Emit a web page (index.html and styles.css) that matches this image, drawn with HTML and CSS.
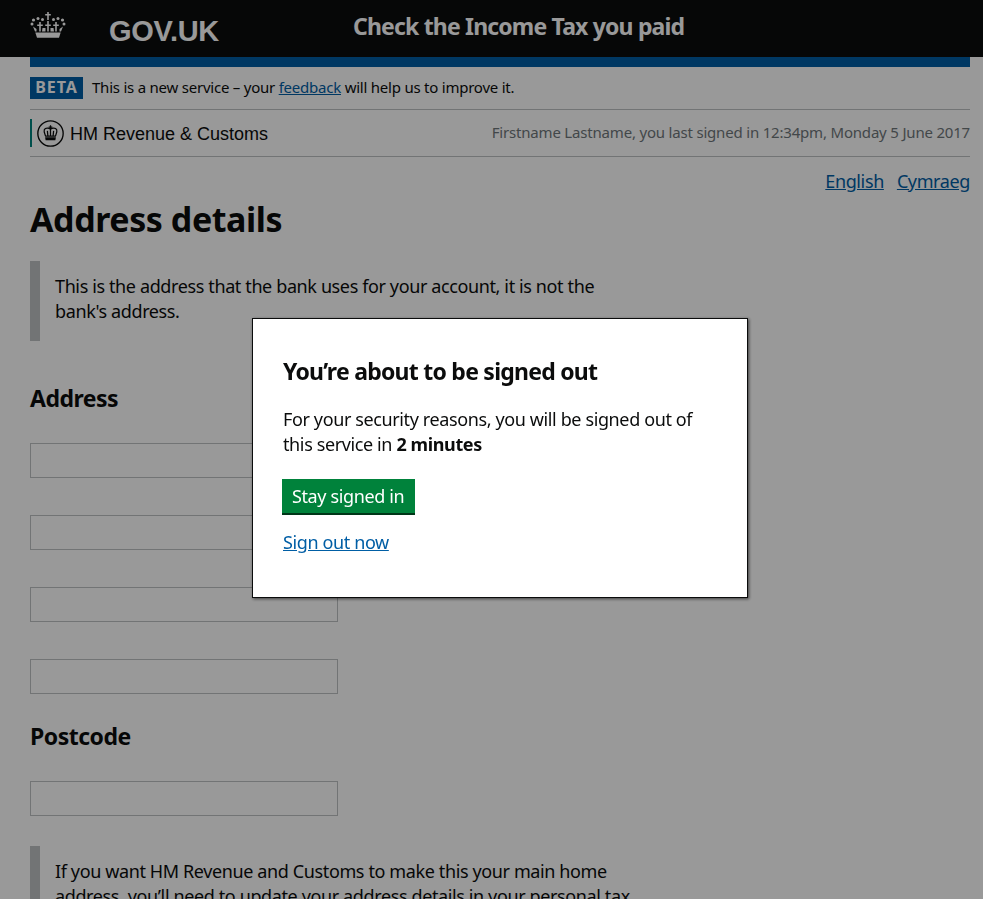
FILE: index.html
```html
<!DOCTYPE html>
<html lang="en">
<head>
<meta charset="utf-8">
<title>Address details</title>
<link rel="stylesheet" href="styles.css">
</head>
<body>
<header class="site-header">
  <div class="logo">
    <svg class="crown" viewBox="30 11 36 28" width="36" height="28" aria-hidden="true">
      <g fill="currentColor">
        <path d="M47.200 12h1.600v2h2v1.600h-2V20h-1.600v-4.400h-2V14h2z"/>
        <circle cx="32" cy="24" r="1.500"/><circle cx="33.500" cy="20" r="1.600"/><circle cx="38" cy="18.500" r="1.500"/><circle cx="42.500" cy="19.500" r="1.500"/>
        <circle cx="64" cy="24" r="1.500"/><circle cx="62.500" cy="20" r="1.600"/><circle cx="58" cy="18.500" r="1.500"/><circle cx="53.500" cy="19.500" r="1.500"/>
        <path d="M39.200 22h1.600v2.500h2v1.600h-2v5.400h-1.600v-5.400h-2v-1.600h2z"/>
        <path d="M47.200 21h1.600v3.500h2v1.600h-2v5.400h-1.600v-5.400h-2v-1.600h2z"/>
        <path d="M55.200 22h1.600v2.500h2v1.600h-2v5.400h-1.600v-5.400h-2v-1.600h2z"/>
        <path d="M33 26.500l3.500 2.500v2.500h-1.500zM63 26.500L59.500 29v2.500H61zM42.500 28h3v3.500h-3.500zM50.500 28h3l.5 3.500h-3.500z"/>
        <path d="M35.300 32.500h25.400L59 37.800H37z"/>
      </g>
    </svg>
    <span class="wordmark">GOV.UK</span>
  </div>
  <span class="service-name">Check the Income Tax you paid</span>
</header>
<main class="page">
  <div class="rule-blue"></div>
  <div class="beta"><strong class="tag">BETA</strong><span class="beta-text">This is a new service – your <a href="#">feedback</a> will help us to improve it.</span></div>
  <div class="account">
    <div class="org">
      <svg class="org-crest" viewBox="0 0 26 26" width="27" height="27" aria-hidden="true">
        <circle cx="13" cy="13" r="12.200" fill="none" stroke="currentColor" stroke-width="1.300"/>
        <g fill="none" stroke="currentColor" stroke-width="1.200">
          <path d="M13 9c-1.500-1.500-5-1.500-6 .5-.7 1.700.5 4 1.300 6h9.400c.8-2 2-4.300 1.300-6-1-2-4.500-2-6-.5zM13 9v6.500M10 10.500l.5 5M16 10.500l-.5 5"/>
        </g>
        <path fill="currentColor" d="M12.400 5h1.200v1.200h1.200v1.200h-1.200V9h-1.200V7.400h-1.200V6.200h1.200zM7.800 16.500h10.400l-.5 3H8.300z"/>
      </svg>
      <span class="org-name">HM Revenue &amp; Customs</span>
    </div>
    <p class="last-login">Firstname Lastname, you last signed in 12:34pm, Monday 5 June 2017</p>
  </div>
  <nav class="lang"><a href="#">English</a><a href="#">Cymraeg</a></nav>
  <h1>Address details</h1>
  <p class="inset inset-first">This is the address that the bank uses for your account, it is not the bank's address.</p>
  <h2 class="sub-first">Address</h2>
  <div class="fields">
    <div class="field"></div>
    <div class="field"></div>
    <div class="field"></div>
    <div class="field"></div>
  </div>
  <h2 class="sub-post">Postcode</h2>
  <div class="field"></div>
  <p class="inset inset-second">If you want HM Revenue and Customs to make this your main home address, you’ll need to update your address details in your personal tax account.</p>
</main>
<div class="overlay"></div>
<section class="dialog" role="dialog" aria-modal="true">
  <h2 class="dialog-title">You’re about to be signed out</h2>
  <p class="dialog-text">For your security reasons, you will be signed out of this service in <strong>2 minutes</strong></p>
  <a class="button" href="#">Stay signed in</a>
  <a class="sign-out" href="#">Sign out now</a>
</section>
</body>
</html>
```
FILE: styles.css
```css
* { box-sizing: border-box; }
html, body { margin: 0; height: 100%; overflow: hidden; }
body { font-family: "Noto Sans", sans-serif; color: #0b0c0c; background: #fff; font-size: 18px; letter-spacing: -.38px; line-height: 25px; }
a { color: #005ea5; }
p, h1, h2 { margin: 0; }

.site-header { height: 57px; background: #0b0c0c; color: #fff; display: flex; align-items: center; }
.logo { display: flex; align-items: center; width: 353px; padding-left: 30px; }
.crown { margin-top: -7px; }
.wordmark { font-family: "Liberation Sans", sans-serif; font-weight: 700; font-size: 29px; letter-spacing: -.3px; margin-left: 43px; margin-top: 5px; }
.service-name { font-weight: 700; font-size: 23px; letter-spacing: -.82px; margin-top: -5px; }

.page { padding: 0 13px 0 30px; }
.rule-blue { height: 10px; background: #005ea5; }
.beta { display: flex; align-items: center; height: 43px; border-bottom: 1px solid #bfc1c3; font-size: 15px; letter-spacing: -.23px; }
.tag { background: #005ea5; color: #fff; font-size: 16px; letter-spacing: .9px; width: 53px; height: 22px; line-height: 21px; text-align: center; margin-right: 9px; margin-top: -1px; }
.beta-text { margin-top: -2px; }

.account { display: flex; align-items: center; justify-content: space-between; height: 47px; border-bottom: 1px solid #bfc1c3; }
.org { display: flex; align-items: center; gap: 6px; height: 28px; border-left: 2px solid #00847f; padding-left: 5px; font-family: "Liberation Sans", sans-serif; font-size: 18px; letter-spacing: 0; }
.org-name { margin-top: 2px; }
.last-login { color: #6f777b; font-size: 15px; letter-spacing: -.19px; margin-top: -2px; }

.lang { display: flex; justify-content: flex-end; gap: 13px; margin-top: 12px; }
h1 { font-size: 34px; line-height: 40px; font-weight: 700; letter-spacing: -.43px; margin-top: 5px; }
.inset { border-left: 10px solid #bfc1c3; padding: 13px 0 17px 15px; width: 610px; }
.inset-first { margin-top: 22px; }
h2 { font-size: 23px; line-height: 30px; font-weight: 700; letter-spacing: -.5px; }
.sub-first { margin-top: 42px; }
.fields { display: flex; flex-direction: column; gap: 37px; margin-top: 30px; }
.field { width: 308px; height: 35px; border: 1px solid #bfc1c3; }
.sub-post { margin-top: 27px; margin-bottom: 30px; }
.inset-second { margin-top: 30px; }

.overlay { position: fixed; inset: 0; background: rgba(0, 0, 0, .4); }
.dialog { position: fixed; left: 252px; top: 318px; width: 496px; height: 280px; background: #fff; border: 1px solid #0b0c0c; box-shadow: 1px 1px 3px rgba(0,0,0,.6); padding: 37px 30px 0; }
.dialog-title { font-size: 23px; line-height: 30px; letter-spacing: -.75px; }
.dialog-text { margin-top: 21px; width: 430px; }
.button { display: inline-block; margin: 22px 0 0 -1px; background: #00823b; color: #fff; text-decoration: none; padding: 5px 11px 5px 10px; height: 36px; border-bottom: 2px solid #003618; }
.sign-out { display: block; margin-top: 15px; }
```
